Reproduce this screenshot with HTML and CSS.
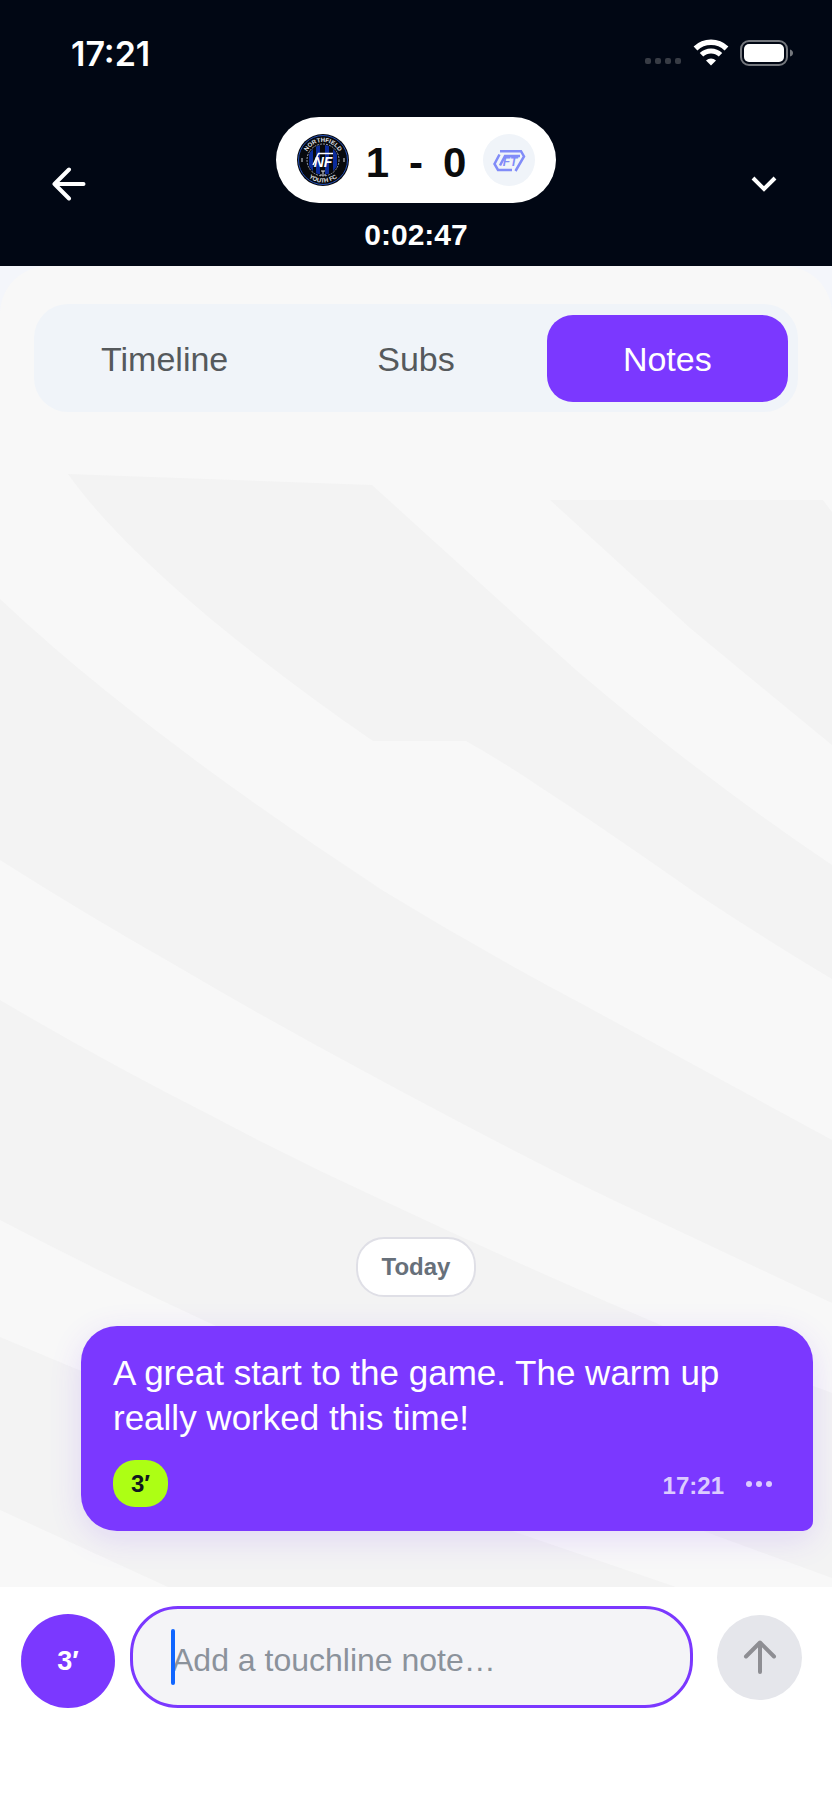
FILE: index.html
```html
<!DOCTYPE html>
<html lang="en">
<head>
    <meta charset="UTF-8">
    <meta name="viewport" content="width=device-width, initial-scale=1.0">
    <title>Match notes</title>
    <link rel="stylesheet" href="styles.css">
</head>
<body>
<header class="header">
    <div class="status-bar">
        <span class="status-time">17:21</span>
        <div class="status-icons">
            <svg class="signal" width="38" height="28" viewBox="0 0 38 28" fill="#383c45">
                <rect x="1" y="19" width="6" height="6" rx="2"/>
                <rect x="11" y="19" width="6" height="6" rx="2"/>
                <rect x="21" y="19" width="6" height="6" rx="2"/>
                <rect x="31" y="19" width="6" height="6" rx="2"/>
            </svg>
            <svg width="36" height="28" viewBox="0 0 36 28" fill="none" stroke="#fff">
                <path d="M2.500 9.500a22.500 22.500 0 0 1 31 0" stroke-width="5.500"/>
                <path d="M8.500 15.800a13.700 13.700 0 0 1 19 0" stroke-width="5"/>
                <path d="M18 26.500l-5-5a7.200 7.200 0 0 1 10 0z" fill="#fff" stroke="none"/>
            </svg>
            <svg width="54" height="28" viewBox="0 0 54 28">
                <rect x="1" y="2" width="46" height="24" rx="8" fill="none" stroke="#74777d" stroke-width="2"/>
                <rect x="4" y="5" width="40" height="18" rx="5" fill="#fff"/>
                <path d="M50 10.500q3 1 3 3.500t-3 3.500z" fill="#74777d"/>
            </svg>
        </div>
    </div>
    <div class="match-bar">
        <button type="button" class="icon-button" aria-label="Back">
            <svg width="36" height="36" viewBox="0 0 36 36" fill="none" stroke="#fff" stroke-width="4" stroke-linecap="round" stroke-linejoin="round">
                <path d="M33.500 17H4.500M19 2.500L4.500 17 19 31.500"/>
            </svg>
        </button>
        <div class="match">
            <div class="score-pill">
                <svg class="crest" viewBox="0 0 52 52">
                    <defs>
                        <path id="arcTop" d="M8 26a18 18 0 0 1 36 0"/>
                        <path id="arcBottom" d="M3.500 26a22.500 22.500 0 0 0 45 0"/>
                        <clipPath id="crestInner"><circle cx="26" cy="26" r="15"/></clipPath>
                    </defs>
                    <circle cx="26" cy="26" r="26" fill="#07090d"/>
                    <circle cx="26" cy="26" r="24.500" fill="none" stroke="#2450b8" stroke-width="1"/>
                    <g clip-path="url(#crestInner)" fill="#0b2c9c">
                        <rect x="12" y="10" width="4" height="32"/>
                        <rect x="19" y="10" width="4" height="32"/>
                        <rect x="28" y="10" width="4" height="32"/>
                        <rect x="36" y="10" width="4" height="32"/>
                    </g>
                    <circle cx="26" cy="26" r="16" fill="none" stroke="#9aa0ab" stroke-width="1" stroke-dasharray="2 1"/>
                    <text class="crest-text"><textPath href="#arcTop" startOffset="50%">NORTHFIELD</textPath></text>
                    <text class="crest-text"><textPath href="#arcBottom" startOffset="50%">YOUTH FC</textPath></text>
                    <path d="M5 24v4M47 24v4" stroke="#d8dbe2" stroke-width="1"/>
                    <path d="M16 31l5.500-11.500H36" fill="none" stroke="#fff" stroke-width="1.500"/>
                    <text class="crest-mono" x="26" y="33">NF</text>
                    <path d="M24 37h4M23 41h6M26 37v3" stroke="#d8dbe2" stroke-width="1"/>
                </svg>
                <div class="score">
                    <span>1</span>
                    <span>-</span>
                    <span>0</span>
                </div>
                <svg class="crest" viewBox="0 0 52 52">
                    <circle cx="26" cy="26" r="26" fill="#f0f4f9"/>
                    <g fill="none" stroke="#818cf8" stroke-width="2.500">
                        <path d="M17 17.200h21l3 5.300-8.500 14.500"/>
                        <path d="M16.500 20.500L11.500 30l3.500 6h14"/>
                        <path d="M17 31.500l5-9.500h15"/>
                    </g>
                    <text class="away-mono" x="27" y="32">FT</text>
                </svg>
            </div>
            <div class="clock">0:02:47</div>
        </div>
        <button type="button" class="icon-button right" aria-label="Match details">
            <svg width="26" height="18" viewBox="0 0 26 18" fill="none" stroke="#fff" stroke-width="4">
                <path d="M2 2l11 11L24 2"/>
            </svg>
        </button>
    </div>
</header>

<main class="stage">
    <div class="panel">
        <svg class="pattern" viewBox="0 266 832 1321" preserveAspectRatio="xMidYMin slice" fill="#f3f3f3" aria-hidden="true">
            <path d="M68 474L372 485Q470 574 576 670Q700 776 832 865V979Q770 942 700 896Q584 815 540 787Q500 760 466 741H373Q290 684 212 620Q111 535 68 474z"/>
            <path d="M550 500H823L832 512V745Q760 686 690 628z"/>
            <path d="M0 599Q50 646 106 691Q170 743 239 792Q310 843 382 890Q480 950 584 1005L832 1140V1303L613 1200L584 1186Q480 1134 371 1075Q270 1021 175 965Q85 914 0 860z"/>
            <path d="M0 1000Q105 1062 212 1116Q295 1160 382 1200Q520 1265 663 1326Q750 1362 832 1393V1578L706 1532Q450 1433 216 1326Q105 1275 0 1220z"/>
            <path d="M0 1337L74 1368Q290 1456 515 1532L676 1587H168L0 1510z"/>
        </svg>
        <nav class="tabs">
            <button type="button" class="tab">Timeline</button>
            <button type="button" class="tab">Subs</button>
            <button type="button" class="tab active">Notes</button>
        </nav>
        <section class="notes">
            <div class="day">Today</div>
            <article class="note">
                <p class="note-text">A great start to the game. The warm up really worked this time!</p>
                <div class="note-footer">
                    <span class="minute-badge">3′</span>
                    <time class="note-time">17:21</time>
                    <button type="button" class="more" aria-label="Note options">
                        <svg width="28" height="8" viewBox="0 0 28 8" fill="#dccbff">
                            <circle cx="4" cy="4" r="3"/>
                            <circle cx="14" cy="4" r="3"/>
                            <circle cx="24" cy="4" r="3"/>
                        </svg>
                    </button>
                </div>
            </article>
        </section>
    </div>
</main>

<form class="composer">
    <button type="button" class="minute-button">3′</button>
    <div class="field">
        <input type="text" class="note-input" placeholder="Add a touchline note…" aria-label="Touchline note">
        <span class="caret"></span>
    </div>
    <button type="submit" class="send" aria-label="Send note">
        <svg width="36" height="36" viewBox="0 0 36 36" fill="none" stroke="#8e8e93" stroke-width="4" stroke-linecap="round" stroke-linejoin="round">
            <path d="M18 33V3.500M4 17.500l14-14 14 14"/>
        </svg>
    </button>
</form>
</body>
</html>
```
FILE: styles.css
```css
* {
    box-sizing: border-box;
}
body {
    margin: 0;
    min-height: 100vh;
    display: flex;
    flex-direction: column;
    background: #fff;
    font-family: "Liberation Sans", Arial, sans-serif;
}
button {
    border: none;
    padding: 0;
    background: none;
    font-family: inherit;
    cursor: pointer;
}
svg {
    display: block;
}

/* Header */
.header {
    background: #010714;
    color: #fff;
    padding-bottom: 14px;
}
.status-bar {
    display: flex;
    align-items: center;
    justify-content: space-between;
    height: 106px;
    padding: 0 38px 0 71px;
}
.status-time {
    font-family: Inter, sans-serif;
    font-size: 34px;
    font-weight: 600;
}
.status-icons {
    display: flex;
    gap: 11px;
}
.match-bar {
    display: grid;
    grid-template-columns: 1fr auto 1fr;
    align-items: center;
    padding: 11px 50px 0;
}
.icon-button {
    justify-self: start;
}
.icon-button.right {
    justify-self: end;
    margin-right: 5px;
}
.match {
    display: flex;
    flex-direction: column;
    align-items: center;
    gap: 15px;
}
.score-pill {
    display: flex;
    align-items: center;
    gap: 17px;
    height: 86px;
    padding: 0 21px;
    border-radius: 43px;
    background: #fff;
}
.crest {
    width: 52px;
    height: 52px;
}
.crest-text {
    fill: #e4e6ea;
    font-size: 6px;
    font-weight: bold;
    text-anchor: middle;
}
.crest-mono {
    fill: #fff;
    font-size: 14px;
    font-style: italic;
    font-weight: bold;
    text-anchor: middle;
}
.away-mono {
    fill: #818cf8;
    font-size: 12px;
    font-style: italic;
    font-weight: bold;
    text-anchor: middle;
}
.score {
    display: flex;
    gap: 20px;
    color: #0b0b0c;
    font-size: 42px;
    font-weight: bold;
    line-height: 48px;
    padding-top: 5px;
}
.clock {
    font-size: 30px;
    font-weight: bold;
    line-height: 34px;
}

/* Notes panel */
.stage {
    flex: 1;
    display: flex;
    background: #f4f6fb;
}
.panel {
    position: relative;
    flex: 1;
    display: flex;
    flex-direction: column;
    overflow: hidden;
    border-radius: 48px 48px 0 0;
    background: #f8f8f8;
}
.pattern {
    position: absolute;
    top: 0;
    left: 0;
    width: 100%;
    height: 100%;
}
.tabs {
    position: relative;
    display: grid;
    grid-template-columns: repeat(3, 1fr);
    gap: 10px;
    margin: 38px 34px 0;
    padding: 11px 10px 10px;
    border-radius: 34px;
    background: #f0f4f9;
}
.tab {
    height: 87px;
    padding-top: 2px;
    border-radius: 26px;
    color: #55595c;
    font-size: 34px;
}
.tab.active {
    background: #7b38ff;
    color: #fff;
}
.notes {
    position: relative;
    flex: 1;
    display: flex;
    flex-direction: column;
    justify-content: flex-end;
    padding: 0 19px 56px 81px;
}
.day {
    align-self: center;
    margin: 0 62px 29px 0;
    padding: 0 24px;
    border: 2px solid #dfdfe6;
    border-radius: 28px;
    background: #fff;
    color: #67707a;
    font-size: 24px;
    font-weight: bold;
    line-height: 56px;
}
.note {
    padding: 24px 32px;
    border-radius: 36px 36px 10px 36px;
    background: #7b38ff;
    box-shadow: 0 8px 32px rgba(123, 56, 255, 0.15);
    color: #fff;
}
.note-text {
    margin: 0 0 20px;
    font-size: 35px;
    line-height: 45px;
}
.note-footer {
    display: flex;
    align-items: center;
}
.minute-badge {
    padding: 1px 18px 0;
    border-radius: 22px;
    background: #adff14;
    color: #111820;
    font-size: 24px;
    font-weight: bold;
    line-height: 46px;
}
.note-time {
    margin-left: auto;
    padding-top: 4px;
    color: #dccbff;
    font-size: 24px;
    font-weight: bold;
}
.more {
    padding: 10px 8px 10px 21px;
}

/* Composer */
.composer {
    display: flex;
    align-items: flex-end;
    padding: 19px 30px 92px 21px;
}
.minute-button {
    width: 94px;
    height: 94px;
    border-radius: 50%;
    background: #7b38ff;
    color: #fff;
    font-size: 27px;
    font-weight: bold;
}
.field {
    position: relative;
    flex: 1;
    margin: 0 24px 0 15px;
}
.note-input {
    display: block;
    width: 100%;
    height: 102px;
    padding: 6px 39px 0;
    border: 3px solid #7b38ff;
    border-radius: 48px;
    outline: none;
    background: #f4f4f7;
    color: #111820;
    font-family: inherit;
    font-size: 32px;
}
.note-input::placeholder {
    color: #8b929b;
    opacity: 1;
}
.caret {
    position: absolute;
    top: 23px;
    left: 41px;
    width: 4px;
    height: 56px;
    border-radius: 2px;
    background: #1066ff;
}
.send {
    align-self: center;
    display: flex;
    align-items: center;
    justify-content: center;
    width: 85px;
    height: 85px;
    border-radius: 50%;
    background: #e5e6eb;
}
```
